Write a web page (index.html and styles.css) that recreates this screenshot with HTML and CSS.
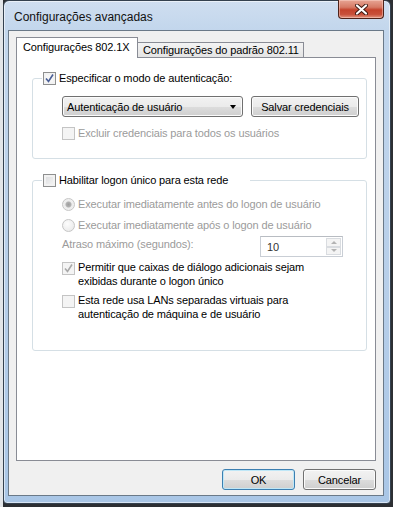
FILE: index.html
```html
<!DOCTYPE html>
<html lang="pt-BR">
<head>
  <meta charset="UTF-8">
  <title>Configurações avançadas</title>
  <link rel="stylesheet" href="styles.css">
</head>
<body>
  <div class="window">
    <div class="titlebar">
      <span class="title">Configurações avançadas</span>
      <button class="close" aria-label="Fechar">
        <svg width="13" height="11" viewBox="0 0 13 11">
          <path d="M2 1.5 L11 9.5 M11 1.5 L2 9.5" stroke="#3b1710" stroke-width="4" stroke-linecap="round"/>
          <path d="M2 1.5 L11 9.5 M11 1.5 L2 9.5" stroke="#ffffff" stroke-width="2.2" stroke-linecap="round"/>
        </svg>
      </button>
    </div>

    <div class="client">
      <div class="tabs">
        <div class="tab active">Configurações 802.1X</div>
        <div class="tab">Configurações do padrão 802.11</div>
      </div>

      <div class="panel">
        <fieldset class="group first">
          <legend class="legend wide">
            <span class="box checked"><svg width="9" height="9" viewBox="0 0 9 9"><path d="M1 4.5 L3.5 7.5 L8 0.5" fill="none" stroke="#4a5f97" stroke-width="1.6"/></svg></span>
            Especificar o modo de autenticação:
          </legend>
          <div class="group-body">
            <div class="row">
              <div class="select">Autenticação de usuário<span class="arrow"></span></div>
              <button class="btn save">Salvar credenciais</button>
            </div>
            <div class="check disabled spaced">
              <span class="box"></span>Excluir credenciais para todos os usuários
            </div>
          </div>
        </fieldset>

        <fieldset class="group second">
          <legend class="legend narrow">
            <span class="box"></span>
            Habilitar logon único para esta rede
          </legend>
          <div class="group-body tall">
            <div class="check disabled">
              <span class="radio selected"></span>Executar imediatamente antes do logon de usuário
            </div>
            <div class="check disabled gap">
              <span class="radio"></span>Executar imediatamente após o logon de usuário
            </div>
            <div class="delay">
              <span class="delay-label">Atraso máximo (segundos):</span>
              <div class="spin">
                <span class="spin-value">10</span>
                <div class="spin-buttons">
                  <span class="spin-up"></span>
                  <span class="spin-down"></span>
                </div>
              </div>
            </div>
            <div class="check multi first-multi">
              <span class="box dim"><svg width="9" height="9" viewBox="0 0 9 9"><path d="M1 4.5 L3.5 7.5 L8 0.5" fill="none" stroke="#a8a8a8" stroke-width="1.6"/></svg></span>
              <span>Permitir que caixas de diálogo adicionais sejam<br>exibidas durante o logon único</span>
            </div>
            <div class="check multi">
              <span class="box dim"></span>
              <span>Esta rede usa LANs separadas virtuais para<br>autenticação de máquina e de usuário</span>
            </div>
          </div>
        </fieldset>
      </div>

      <div class="actions">
        <button class="btn default">OK</button>
        <button class="btn">Cancelar</button>
      </div>
    </div>
  </div>
</body>
</html>
```

FILE: styles.css
```css
body {
  margin: 0;
  font-family: "Liberation Sans", Arial, sans-serif;
  font-size: 11px;
  letter-spacing: -0.12px;
  color: #000;
  background: linear-gradient(to right, #e2e5e8 0, #e2e5e8 3px, #2c2f33 3px);
  height: 507px;
  overflow: hidden;
}
.window {
  box-sizing: border-box;
  width: 388px;
  height: 504px;
  margin-left: 3px;
  padding: 0 6px 7px 4px;
  border: 1px solid #34414f;
  border-radius: 6px 6px 4px 4px;
  background: linear-gradient(to bottom, #cfdef0 0, #c2d6ec 30px, #b6cee9 60%, #a9c6e6 100%);
  box-shadow: inset 0 0 0 1px rgba(255, 255, 255, 0.55);
}
.titlebar {
  height: 29px;
  display: flex;
  justify-content: space-between;
  align-items: flex-start;
}
.title {
  font-size: 12px;
  letter-spacing: 0;
  margin: 9px 0 0 6px;
  color: #111;
}
.close {
  width: 46px;
  height: 19px;
  margin-top: -1px;
  padding: 0;
  border: 1px solid #4e2219;
  border-top: none;
  border-radius: 0 0 4px 4px;
  background: linear-gradient(to bottom, #e7a594 0, #d67a65 40%, #c4432c 55%, #c8503a 80%, #e29580 100%);
  box-shadow: inset 0 0 0 1px rgba(255, 220, 210, 0.45);
  display: flex;
  align-items: center;
  justify-content: center;
}
.client {
  border: 1px solid #6a7988;
  background: #f0f0f0;
  padding: 6px 7px 5px 7px;
}
.tabs {
  display: flex;
  align-items: flex-end;
  height: 20px;
}
.tab {
  box-sizing: border-box;
  height: 15px;
  width: 167px;
  margin-left: -1px;
  padding-left: 5px;
  border: 1px solid #898c95;
  border-bottom: none;
  background: linear-gradient(to bottom, #f3f3f3, #e4e4e4);
  line-height: 14px;
  white-space: nowrap;
}
.tab.active {
  position: relative;
  z-index: 1;
  width: 122px;
  height: 21px;
  margin-left: 0;
  margin-bottom: -1px;
  padding-left: 6px;
  background: #fff;
  line-height: 19px;
}
.panel {
  box-sizing: border-box;
  height: 404px;
  border: 1px solid #898c95;
  background: #fff;
  padding: 14px 8px 0 15px;
}
.group {
  margin: 0;
  padding: 0;
  width: 335px;
  box-sizing: border-box;
  border: 1px solid #d5dfe5;
  border-radius: 3px;
  min-inline-size: 0;
}
.group.second {
  margin-top: 15px;
}
.legend {
  margin-left: 9px;
  padding: 0 0 0 1px;
  height: 13px;
  line-height: 13px;
  display: flex;
  align-items: center;
  gap: 3px;
  white-space: nowrap;
}
.legend.wide {
  width: 257px;
}
.legend.narrow {
  width: 207px;
}
.group-body {
  padding: 11px 0 18px 29px;
}
.group-body.tall {
  padding-bottom: 29px;
}
.box {
  box-sizing: border-box;
  width: 13px;
  height: 13px;
  flex: none;
  border: 1px solid #8e8f8f;
  background: linear-gradient(135deg, #d9dadc, #f7f7f7);
  box-shadow: inset 0 0 0 2px #f2f2f2;
  display: flex;
  align-items: center;
  justify-content: center;
}
.box.checked {
  background: #f6f6f6;
}
.check {
  display: flex;
  align-items: center;
  gap: 3px;
  line-height: 13px;
  height: 13px;
  white-space: nowrap;
}
.check.disabled {
  color: #9b9b9b;
}
.check.disabled .box,
.box.dim {
  border-color: #c4c4c4;
  background: #f4f4f4;
  box-shadow: none;
}
.check.spaced {
  margin-top: 10px;
}
.check.gap {
  margin-top: 8px;
}
.check.multi {
  height: auto;
  align-items: flex-start;
  line-height: 14px;
  margin-top: 5px;
}
.check.multi .box {
  margin-top: 2px;
}
.check.first-multi {
  margin-top: 3px;
}
.radio {
  box-sizing: border-box;
  width: 13px;
  height: 13px;
  flex: none;
  border-radius: 50%;
  border: 1px solid #c6c6c6;
  background: radial-gradient(circle at 40% 35%, #fdfdfd, #e6e6e6);
}
.radio.selected {
  background: radial-gradient(circle, #9d9d9d 0, #b3b3b3 2.5px, #ececec 3.5px, #f5f5f5 100%);
}
.row {
  display: flex;
  gap: 7px;
  height: 21px;
}
.select {
  box-sizing: border-box;
  width: 181px;
  height: 21px;
  padding-left: 4px;
  border: 1px solid #707070;
  border-radius: 3px;
  background: linear-gradient(to bottom, #f2f2f2 0, #ebebeb 50%, #dddddd 50%, #cfcfcf 100%);
  box-shadow: inset 0 0 0 1px #fbfbfb;
  display: flex;
  align-items: center;
  justify-content: space-between;
  padding-right: 6px;
}
.arrow {
  width: 0;
  height: 0;
  border-left: 3.5px solid transparent;
  border-right: 3.5px solid transparent;
  border-top: 4px solid #000;
}
.btn {
  box-sizing: border-box;
  height: 21px;
  padding: 0;
  font: inherit;
  letter-spacing: inherit;
  color: #000;
  border: 1px solid #707070;
  border-radius: 3px;
  background: linear-gradient(to bottom, #f2f2f2 0, #ebebeb 50%, #dddddd 50%, #cfcfcf 100%);
  box-shadow: inset 0 0 0 1px #fbfbfb;
}
.btn.save {
  width: 108px;
  margin-left: 1px;
}
.delay {
  display: flex;
  align-items: flex-start;
  height: 21px;
  margin-top: 4px;
}
.delay-label {
  width: 198px;
  color: #9b9b9b;
  line-height: 13px;
  padding-top: 2px;
}
.spin {
  box-sizing: border-box;
  width: 83px;
  height: 21px;
  border: 1px solid #c9ced5;
  border-top-color: #b8bcc2;
  background: #fff;
  display: flex;
  justify-content: space-between;
}
.spin-value {
  padding: 4px 0 0 6px;
  color: #333;
}
.spin-buttons {
  width: 15px;
  display: flex;
  flex-direction: column;
  padding: 1px 1px 1px 0;
}
.spin-up,
.spin-down {
  flex: 1;
  border: 1px solid #d9dce0;
  background: #f4f4f4;
  display: flex;
  align-items: center;
  justify-content: center;
}
.spin-up::after {
  content: "";
  border-left: 3px solid transparent;
  border-right: 3px solid transparent;
  border-bottom: 3px solid #b3b3b3;
}
.spin-down::after {
  content: "";
  border-left: 3px solid transparent;
  border-right: 3px solid transparent;
  border-top: 3px solid #b3b3b3;
}
.actions {
  display: flex;
  justify-content: flex-end;
  gap: 8px;
  margin-top: 8px;
}
.actions .btn {
  width: 73px;
}
.btn.default {
  border-color: #3c7fb1;
  box-shadow: inset 0 0 0 1px #bfe7f7;
}
```
